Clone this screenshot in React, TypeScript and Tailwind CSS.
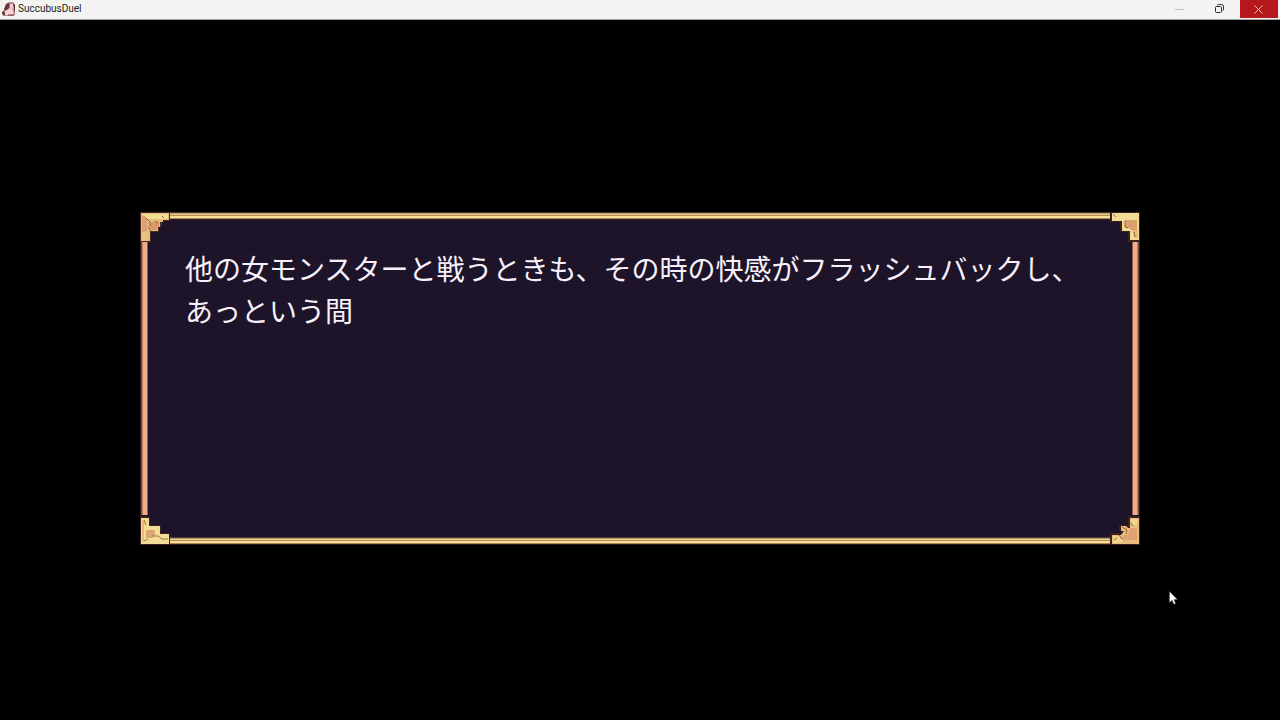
import React from 'react';

const APP_TITLE = 'SuccubusDuel';
const LINES = ['他の女モンスターと戦うときも、その時の快感がフラッシュバックし、', 'あっという間'];

const AppIcon = () => (
  <svg width="14" height="14" viewBox="0 0 14 14" aria-hidden="true">
    <path d="M4 2 7 0h4l2 3v9l-1 2H1l-1-4 3-3z" fill="#b98a92" />
    <path d="M4 2 7 1l1 2-2 4-3 2-1-2z" fill="#6b3440" />
    <path d="M8 2h3l1 4-3 2-2-1z" fill="#f3c9c9" />
    <path d="M3 9l4-2 4 1 1 4-4 1H3z" fill="#f7d3d3" />
    <path d="M0 10l2-1 1 4H1z" fill="#5b2632" />
    <path d="M11 1l2 2v9l-1-5z" fill="#54303a" />
    <path d="M6 5l2 1M6 13h6" stroke="#7d3345" />
  </svg>
);

const TitleBar: React.FC = () => (
  <header className="flex h-5 items-start border-b border-[#a3a39f] bg-[#f3f4f2] px-[2px]">
    <div className="flex flex-1 items-center gap-[2px]">
      <AppIcon />
      <h1 className="font-[Roboto,sans-serif] text-[10px] leading-[18px] text-[#1c1c1c]">{APP_TITLE}</h1>
    </div>
    <button type="button" aria-label="Minimize" className="flex h-[18px] w-10 items-center justify-center">
      <svg width="10" height="10" viewBox="0 0 10 10"><path d="M0 5.500h9" stroke="#c2c2c2" /></svg>
    </button>
    <button type="button" aria-label="Restore" className="flex h-[18px] w-10 items-center justify-center">
      <svg width="10" height="10" viewBox="0 0 10 10" fill="none" stroke="#2c2c34">
        <rect x="0.5" y="2.5" width="6" height="6" rx="1" />
        <path d="M2.500 1.500q0-1 1-1h3q2 0 2 2v3q0 1-1 1" />
      </svg>
    </button>
    <button type="button" aria-label="Close" className="flex h-[18px] w-[38px] items-center justify-center bg-[#b7181d]">
      <svg width="10" height="10" viewBox="0 0 10 10"><path d="M.5 1.500l8 8M8.500 1.500l-8 8" stroke="#f3c3b4" /></svg>
    </button>
  </header>
);

const CornerTopLeft = () => (
  <svg width="30" height="30" viewBox="0 0 30 30" aria-hidden="true">
    <path d="M0 0h30v9h-8v6h-3v5h-8v10H0z" fill="#4a2d27" />
    <path d="M1 1h28v7h-6v2h-3v5h-2v4h-8v10H1z" fill="#e3bb7b" />
    <path d="M2 2h26v5H7L4 4z" fill="#f4dc94" />
    <path d="M2 4h3l2 4v13H2z" fill="#dba172" />
    <path d="M11 10h8v5h-2v3h-6l-2-3z" fill="#dc9668" />
    <path d="M2 20l5-1 2 3v6H2z" fill="#e8c381" />
    <path d="M6 6l4 4v4M8 15l3 4M15 9l3 2M22 4l2 2" stroke="#8d5f3c" fill="none" />
  </svg>
);

const CornerTopRight = () => (
  <svg width="30" height="30" viewBox="0 0 30 30" aria-hidden="true">
    <path d="M0 0h30v30H18V20h-8V10H0z" fill="#3a211f" />
    <path d="M2 1h27v27H20v-9h-8V9H2z" fill="#f2dc95" />
    <path d="M15 8h12v10h-6l-2-2h-4z" fill="#dc9f70" />
    <path d="M22 18h6v8h-3z" fill="#e8b981" />
    <path d="M3 2l3 3M15 9v6l3 1M24 20l1 5" stroke="#9a6942" fill="none" />
  </svg>
);

const CornerBottomLeft = () => (
  <svg width="30" height="30" viewBox="0 0 30 30" aria-hidden="true">
    <path d="M0 1h10v9h11v8h9v12H0z" fill="#3a211f" />
    <path d="M1 3h8v8h11v8h9v10H1z" fill="#f3dd95" />
    <path d="M6 15h9v5l-3 3H6z" fill="#dca775" />
    <path d="M2 5h2v22H2z" fill="#e6b982" />
    <path d="M4 5l2 5M12 21h6l4 3h6M4 26l4-2" stroke="#9a7443" fill="none" />
  </svg>
);

const CornerBottomRight = () => (
  <svg width="30" height="30" viewBox="0 0 30 30" aria-hidden="true">
    <path d="M18 1h12v29H0V18h11v-3h-2v-5h9z" fill="#3a211f" />
    <path d="M20 3h9v26H2v-9h9l3-4h-3v-5h5l2 2h2z" fill="#e8be80" />
    <path d="M20 4h7v6h-5z" fill="#f1d58e" />
    <path d="M20 13h7v12H10l4-5h4z" fill="#dfa373" />
    <path d="M3 21h6l4 5-3 2H3z" fill="#f0d58d" />
    <path d="M12 12l5 3-1 4M9 20l3 4M21 8l2 3M4 25l3-2" stroke="#8d5f3c" fill="none" />
  </svg>
);

const HorizontalRail = () => (
  <>
    <div className="h-px bg-[#493a32]" />
    <div className="h-px bg-[#b89a68]" />
    <div className="h-px bg-[#edd18a]" />
    <div className="h-px bg-[#b08d58]" />
    <div className="h-[2px] bg-[#f6df9b]" />
    <div className="h-px bg-[#a98558]" />
    <div className="h-px bg-[#2b1722]" />
  </>
);

const VerticalRail = () => (
  <>
    <div className="w-px bg-[#2a1d1c]" />
    <div className="w-px bg-[#7d5444]" />
    <div className="w-px bg-[#b87c5e]" />
    <div className="w-[4px] bg-[#efae86]" />
    <div className="w-px bg-[#8c5847]" />
  </>
);

const MessageWindow: React.FC = () => (
  <section className="grid grid-cols-[30px_1fr_30px] grid-rows-[30px_1fr_30px] bg-[#1e142a]">
    <CornerTopLeft />
    <div><HorizontalRail /></div>
    <CornerTopRight />
    <div className="flex"><VerticalRail /></div>
    <div className="min-h-[273px] px-[15px] py-[5px] font-['Noto_Sans_CJK_JP',sans-serif] text-[28px] leading-[42px] text-[#f6f1fa]">
      {LINES.map(line => <p key={line}>{line}</p>)}
    </div>
    <div className="flex flex-row-reverse"><VerticalRail /></div>
    <CornerBottomLeft />
    <div className="flex flex-col justify-end"><HorizontalRail /></div>
    <CornerBottomRight />
  </section>
);

const Cursor = () => (
  <svg className="absolute left-[91.3%] top-[82.1%]" width="9" height="14" viewBox="0 0 9 14" aria-hidden="true">
    <path d="M.5.5v11l2.600-2.300 1.700 4 1.800-.8-1.700-3.800h3.400z" fill="#fff" stroke="#555" strokeWidth=".5" />
  </svg>
);

const App: React.FC = () => (
  <div lang="ja" className="relative flex min-h-screen flex-col bg-black">
    <TitleBar />
    <main className="flex-1 px-[140px] pb-10 pt-48">
      <MessageWindow />
    </main>
    <Cursor />
  </div>
);

export default App;
